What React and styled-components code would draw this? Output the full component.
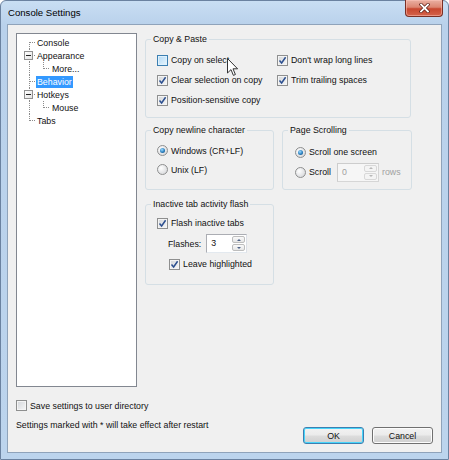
import React from 'react';
import styled, { createGlobalStyle } from 'styled-components';

const GlobalStyle = createGlobalStyle`
  html, body { margin: 0; padding: 0; background: #fff; }
  body {
    font-family: "Liberation Sans", Arial, sans-serif;
    font-size: 8.8px;
    color: #111;
  }
`;

const Window = styled.div`
  width: 449px;
  height: 460px;
  box-sizing: border-box;
  border: 1px solid #6b82a0;
  border-radius: 6px 6px 0 0;
  background: linear-gradient(180deg, #c9def3 0%, #b9d1eb 24px, #bcd4ed 100%);
  padding: 0 6px 6px 6px;
  display: flex;
  flex-direction: column;
  position: relative;
`;

const TitleBar = styled.div`
  height: 23px;
  display: flex;
  align-items: center;
  padding-left: 1px;
  font-size: 9.6px;
  color: #000;
`;

const CloseButton = styled.div`
  position: absolute;
  top: -1px;
  right: 5px;
  width: 38px;
  height: 17px;
  box-sizing: border-box;
  border: 1px solid #7a2f24;
  border-top: none;
  border-radius: 0 0 4px 4px;
  background: linear-gradient(180deg, #eab0a2 0%, #dc8672 45%, #c8472f 55%, #d4634b 100%);
  box-shadow: inset 0 0 0 1px rgba(255, 200, 190, 0.5);
  display: flex;
  align-items: center;
  justify-content: center;
`;

const Client = styled.div`
  flex: 1;
  border: 1px solid #8fa3ba;
  background: #f0f0f0;
  padding: 8px;
  display: flex;
  flex-direction: column;
`;

const Main = styled.div`
  display: flex;
  gap: 8px;
`;

const Tree = styled.div`
  width: 121px;
  height: 354px;
  box-sizing: border-box;
  border: 1px solid #828790;
  background: #fff;
  padding-top: 2px;
  flex-shrink: 0;
`;

const TreeRow = styled.div`
  display: flex;
  align-items: center;
  height: 13px;
`;

const Gutter = styled.span`
  position: relative;
  width: ${p => p.$w}px;
  height: 13px;
  flex-shrink: 0;
`;

const VLine = styled.span`
  position: absolute;
  left: ${p => p.$x}px;
  top: ${p => p.$top}px;
  height: ${p => p.$len}px;
  border-left: 1px dotted #8c8c8c;
`;

const HLine = styled.span`
  position: absolute;
  left: ${p => p.$x}px;
  top: 6px;
  width: ${p => p.$len}px;
  border-top: 1px dotted #8c8c8c;
`;

const Expander = styled.span`
  position: absolute;
  left: 7px;
  top: 2px;
  width: 9px;
  height: 9px;
  box-sizing: border-box;
  border: 1px solid #919191;
  background: linear-gradient(135deg, #ffffff 0%, #e3e3e3 100%);
  display: flex;
  align-items: center;
  justify-content: center;
  &::after {
    content: '';
    width: 5px;
    height: 1px;
    background: #222;
  }
`;

const TreeLabel = styled.span`
  padding: 0 1px;
  line-height: 12px;
  white-space: nowrap;
  background: ${p => (p.$selected ? '#3399ff' : 'transparent')};
  color: ${p => (p.$selected ? '#fff' : '#111')};
`;

const Side = styled.div`
  display: flex;
  flex-direction: column;
  padding-top: 6px;
`;

const Group = styled.div`
  position: relative;
  width: ${p => p.$w}px;
  height: ${p => p.$h}px;
  box-sizing: border-box;
  border: 1px solid #d5dfe5;
  border-radius: 3px;
  padding: ${p => p.$pad};
  margin-top: ${p => p.$mt || 0}px;
`;

const Legend = styled.span`
  position: absolute;
  top: -7px;
  left: 5px;
  padding: 0 2px;
  line-height: 13px;
  background: #f0f0f0;
  white-space: nowrap;
`;

const GroupRow = styled.div`
  display: flex;
  gap: 8px;
  margin-top: ${p => p.$mt}px;
`;

const CheckGrid = styled.div`
  display: grid;
  grid-template-columns: 120px auto;
  grid-auto-rows: 20px;
`;

const Stack = styled.div`
  display: flex;
  flex-direction: column;
`;

const Line = styled.div`
  display: flex;
  align-items: center;
  height: ${p => p.$h || 20}px;
  gap: 3px;
  margin-left: ${p => p.$indent || 0}px;
  white-space: nowrap;
  position: relative;
`;

const Box = styled.span`
  width: 11px;
  height: 11px;
  box-sizing: border-box;
  flex-shrink: 0;
  border: 1px solid ${p => (p.$hover ? '#3c7fb1' : '#8e8f8f')};
  background: ${p =>
    p.$hover
      ? 'linear-gradient(135deg, #b1d8f5 0%, #e8f6fd 100%)'
      : 'linear-gradient(135deg, #d3d6da 0%, #f7f7f7 100%)'};
  box-shadow: inset 0 0 0 1px ${p => (p.$hover ? '#def1fd' : '#f4f4f4')};
  display: flex;
  align-items: center;
  justify-content: center;
`;

const RadioDot = styled.span`
  width: 11px;
  height: 11px;
  box-sizing: border-box;
  flex-shrink: 0;
  border-radius: 50%;
  border: 1px solid #8e8f8f;
  background: radial-gradient(circle at 35% 35%, #ffffff 0%, #e2e3e5 60%, #cfd1d4 100%);
  display: flex;
  align-items: center;
  justify-content: center;
  &::after {
    content: '';
    display: ${p => (p.$on ? 'block' : 'none')};
    width: 5px;
    height: 5px;
    border-radius: 50%;
    background: radial-gradient(circle at 40% 35%, #9fdcff 0%, #2a80c0 55%, #0d3f6c 100%);
  }
`;

const Muted = styled.span`
  color: #a0a0a0;
`;

const SpinBox = styled.div`
  display: flex;
  width: ${p => p.$w}px;
  height: 19px;
  box-sizing: border-box;
  border: 1px solid ${p => (p.$disabled ? '#cdcdcd' : '#abadb3')};
  border-bottom-color: ${p => (p.$disabled ? '#d6d6d6' : '#e3e9ef')};
  border-right-color: ${p => (p.$disabled ? '#d6d6d6' : '#dbdfe6')};
  background: ${p => (p.$disabled ? '#f6f6f6' : '#fff')};
  margin-left: ${p => p.$ml || 0}px;
`;

const SpinValue = styled.span`
  flex: 1;
  padding-left: 4px;
  line-height: 17px;
  color: ${p => (p.$disabled ? '#a0a0a0' : '#111')};
`;

const SpinButtons = styled.div`
  width: 13px;
  display: flex;
  flex-direction: column;
  gap: 1px;
  padding: 1px 1px 1px 0;
`;

const SpinButton = styled.span`
  flex: 1;
  border: 1px solid ${p => (p.$disabled ? '#d8d8d8' : '#bdbdbd')};
  border-radius: 2px;
  background: ${p =>
    p.$disabled ? '#f4f4f4' : 'linear-gradient(180deg, #fafafa 0%, #e6e6e6 100%)'};
  display: flex;
  align-items: center;
  justify-content: center;
  &::after {
    content: '';
    border-left: 2px solid transparent;
    border-right: 2px solid transparent;
    ${p =>
      p.$up
        ? `border-bottom: 2px solid ${p.$disabled ? '#b8b8b8' : '#4d6185'};`
        : `border-top: 2px solid ${p.$disabled ? '#b8b8b8' : '#4d6185'};`}
  }
`;

const SaveRow = styled.div`
  display: flex;
  align-items: center;
  gap: 3px;
  height: 13px;
  margin-top: 12px;
`;

const Footer = styled.div`
  display: flex;
  justify-content: space-between;
  align-items: flex-start;
  margin-top: 7px;
  height: 25px;
`;

const Note = styled.span`
  line-height: 13px;
`;

const Buttons = styled.div`
  display: flex;
  gap: 8px;
  margin-top: 8px;
`;

const Button = styled.div`
  width: 61px;
  height: 17px;
  box-sizing: border-box;
  border: 1px solid ${p => (p.$default ? '#3c7fb1' : '#707070')};
  border-radius: 3px;
  background: linear-gradient(180deg, #f2f2f2 0%, #ebebeb 48%, #dddddd 52%, #cfcfcf 100%);
  box-shadow: inset 0 0 0 1px ${p => (p.$default ? '#48d5fa' : '#fcfcfc')};
  display: flex;
  align-items: center;
  justify-content: center;
`;

const Cursor = styled.svg`
  position: absolute;
  left: 70px;
  top: 8px;
`;

const treeItems = [
  { label: 'Console', trunk: 'first' },
  { label: 'Appearance', trunk: 'mid', expander: true },
  { label: 'More...', trunk: 'mid', child: true },
  { label: 'Behavior', trunk: 'mid', selected: true },
  { label: 'Hotkeys', trunk: 'mid', expander: true },
  { label: 'Mouse', trunk: 'mid', child: true },
  { label: 'Tabs', trunk: 'last' },
];

const trunkSpan = {
  first: { top: 6, len: 7 },
  mid: { top: 0, len: 13 },
  last: { top: 0, len: 7 },
};

const Check = ({ checked, hover }) => (
  <Box $hover={hover}>
    {checked && (
      <svg width="9" height="9" viewBox="0 0 9 9">
        <path d="M1.5 4.6 L3.6 7 L7.6 1.2" fill="none" stroke="#2c4f8f" strokeWidth="1.5" />
      </svg>
    )}
  </Box>
);

const Spin = ({ value, width, disabled, ml }) => (
  <SpinBox $w={width} $disabled={disabled} $ml={ml}>
    <SpinValue $disabled={disabled}>{value}</SpinValue>
    <SpinButtons>
      <SpinButton $up $disabled={disabled} />
      <SpinButton $disabled={disabled} />
    </SpinButtons>
  </SpinBox>
);

const App = () => {
  return (
    <>
      <GlobalStyle />
      <Window>
        <TitleBar>Console Settings</TitleBar>
        <CloseButton>
          <svg width="11" height="10" viewBox="0 0 11 10">
            <path d="M2 1.5 L9 8.5 M9 1.5 L2 8.5" stroke="#5a1c14" strokeWidth="3.2" strokeLinecap="square" />
            <path d="M2 1.5 L9 8.5 M9 1.5 L2 8.5" stroke="#fff" strokeWidth="1.8" strokeLinecap="square" />
          </svg>
        </CloseButton>
        <Client>
          <Main>
            <Tree>
              {treeItems.map(item => (
                <TreeRow key={item.label}>
                  <Gutter $w={item.child ? 34 : 19}>
                    <VLine $x={12} $top={trunkSpan[item.trunk].top} $len={trunkSpan[item.trunk].len} />
                    {item.child ? (
                      <>
                        <VLine $x={26} $top={0} $len={7} />
                        <HLine $x={26} $len={6} />
                      </>
                    ) : (
                      <HLine $x={12} $len={6} />
                    )}
                    {item.expander && <Expander />}
                  </Gutter>
                  <TreeLabel $selected={item.selected}>{item.label}</TreeLabel>
                </TreeRow>
              ))}
            </Tree>

            <Side>
              <Group $w={266} $h={79} $pad="10px 0 0 11px">
                <Legend>Copy &amp; Paste</Legend>
                <CheckGrid>
                  <Line>
                    <Check hover />
                    Copy on select
                    <Cursor width="12" height="19" viewBox="0 0 12 19">
                      <path d="M0.5 0.5 L0.5 15 L4 11.6 L6.4 17.4 L8.4 16.5 L6 10.8 L10.6 10.8 Z" fill="#fff" stroke="#333" strokeWidth="1" />
                    </Cursor>
                  </Line>
                  <Line>
                    <Check checked />
                    Don't wrap long lines
                  </Line>
                  <Line>
                    <Check checked />
                    Clear selection on copy
                  </Line>
                  <Line>
                    <Check checked />
                    Trim trailing spaces
                  </Line>
                  <Line>
                    <Check checked />
                    Position-sensitive copy
                  </Line>
                </CheckGrid>
              </Group>

              <GroupRow $mt={12}>
                <Group $w={129} $h={60} $pad="10px 0 0 11px">
                  <Legend>Copy newline character</Legend>
                  <Stack>
                    <Line $h={19}>
                      <RadioDot $on />
                      Windows (CR+LF)
                    </Line>
                    <Line $h={19}>
                      <RadioDot />
                      Unix (LF)
                    </Line>
                  </Stack>
                </Group>
                <Group $w={130} $h={60} $pad="11px 0 0 12px">
                  <Legend>Page Scrolling</Legend>
                  <Stack>
                    <Line>
                      <RadioDot $on />
                      Scroll one screen
                    </Line>
                    <Line>
                      <RadioDot />
                      Scroll
                      <Spin value="0" width={42} disabled ml={3} />
                      <Muted>rows</Muted>
                    </Line>
                  </Stack>
                </Group>
              </GroupRow>

              <Group $w={129} $h={81} $mt={14} $pad="8px 0 0 11px">
                <Legend>Inactive tab activity flash</Legend>
                <Stack>
                  <Line>
                    <Check checked />
                    Flash inactive tabs
                  </Line>
                  <Line $h={21} $indent={11}>
                    Flashes:
                    <Spin value="3" width={41} ml={2} />
                  </Line>
                  <Line $indent={12}>
                    <Check checked />
                    Leave highlighted
                  </Line>
                </Stack>
              </Group>
            </Side>
          </Main>

          <SaveRow>
            <Check />
            Save settings to user directory
          </SaveRow>

          <Footer>
            <Note>Settings marked with * will take effect after restart</Note>
            <Buttons>
              <Button $default>OK</Button>
              <Button>Cancel</Button>
            </Buttons>
          </Footer>
        </Client>
      </Window>
    </>
  );
};

export default App;
